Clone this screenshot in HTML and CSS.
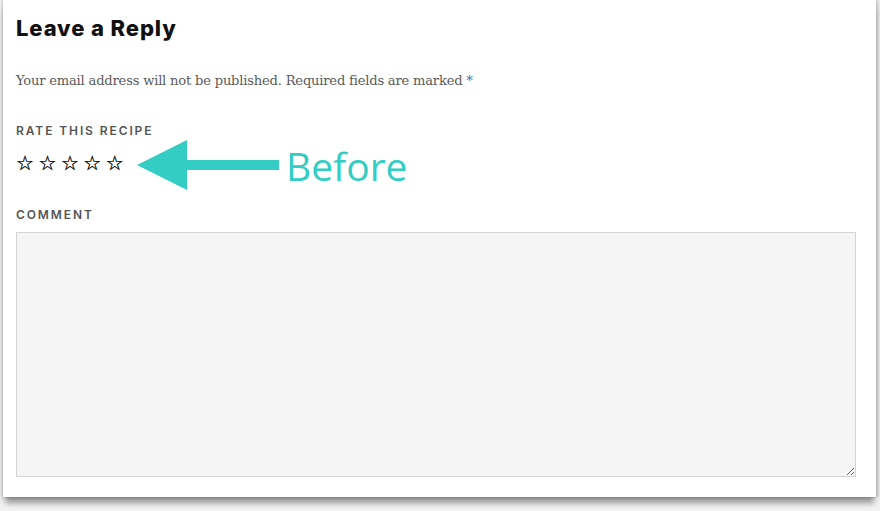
FILE: index.html
```html
<!DOCTYPE html>
<html lang="en">
<head>
    <meta charset="UTF-8">
    <title>Leave a Reply</title>
    <link rel="stylesheet" href="styles.css">
</head>
<body>
    <div class="tarjeta">
        <h3 class="titulo">Leave a Reply</h3>
        <p class="nota">Your email address will not be published. Required fields are marked <span class="req">*</span></p>
        <label class="etiqueta">Rate this recipe</label>
        <div class="fila-rating">
            <div class="estrellas">
                <span>&#9734;</span><span>&#9734;</span><span>&#9734;</span><span>&#9734;</span><span>&#9734;</span>
            </div>
            <div class="flecha">
                <svg width="142" height="50" viewBox="0 0 142 50">
                    <polygon points="0,25 50,0 50,20 142,20 142,30 50,30 50,50" fill="#33cdc4"/>
                </svg>
                <span class="antes">Before</span>
            </div>
        </div>
        <label class="etiqueta comentario">Comment</label>
        <textarea class="caja"></textarea>
    </div>
</body>
</html>
```

FILE: styles.css
```css
* {
    margin: 0;
    padding: 0;
    box-sizing: border-box;
}
body {
    background-color: #f2f2f2;
    width: 880px;
    height: 511px;
    overflow: hidden;
}
.tarjeta {
    background-color: white;
    width: 873px;
    height: 497px;
    margin-left: 3px;
    padding: 13px 20px 0 13px;
    display: flex;
    flex-direction: column;
    box-shadow: 0 8px 6px -2px rgba(0, 0, 0, 0.38), -1px 0 3px rgba(0, 0, 0, 0.2), 3px 0 3px rgba(0, 0, 0, 0.15);
}
.titulo {
    font-family: 'Inter', sans-serif;
    font-weight: 800;
    font-size: 22px;
    letter-spacing: 0.9px;
    color: #111;
    line-height: 30px;
}
.nota {
    font-family: 'DejaVu Serif', serif;
    font-size: 13.1px;
    color: #5a5a5a;
    margin-top: 28px;
    line-height: 20px;
    letter-spacing: -0.2px;
}
.req {
    color: #3c6fb0;
}
.etiqueta {
    font-family: 'Inter', sans-serif;
    font-weight: 600;
    font-size: 12px;
    letter-spacing: 1.9px;
    text-transform: uppercase;
    color: #555;
    margin-top: 33px;
    line-height: 14px;
}
.fila-rating {
    display: flex;
    align-items: center;
    height: 44px;
    margin-top: 5px;
}
.estrellas {
    display: flex;
    gap: 4.5px;
    width: 121px;
    margin-bottom: 5px;
    font-family: 'DejaVu Sans', sans-serif;
    font-size: 20px;
    line-height: 22px;
    color: #000;
    -webkit-text-stroke: 0.3px #000;
}
.flecha {
    display: flex;
    align-items: center;
}
.antes {
    font-family: 'Open Sans', sans-serif;
    font-size: 39px;
    color: #33cdc4;
    margin-left: 7px;
    line-height: 44px;
    margin-top: 1px;
}
.comentario {
    margin-top: 21px;
}
.caja {
    margin-top: 10px;
    width: 840px;
    height: 245px;
    background-color: #f5f5f5;
    border: 1px solid #d4d4d4;
    resize: vertical;
}
```
